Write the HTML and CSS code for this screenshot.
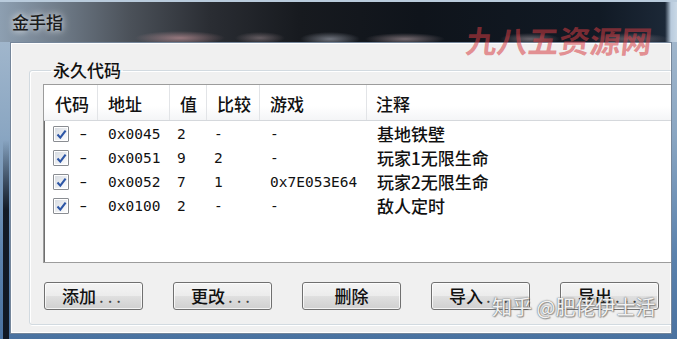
FILE: index.html
```html
<!DOCTYPE html>
<html lang="zh-CN">
<head>
<meta charset="utf-8">
<title>金手指</title>
<link rel="stylesheet" href="styles.css">
</head>
<body>
<div class="window">
  <div class="titlebar">
    <span class="title">金手指</span>
    <div class="glow"></div>
    <span class="wm-top">九八五资源网</span>
  </div>
  <div class="client">
    <fieldset class="group">
      <legend>永久代码</legend>
      <div class="list">
        <div class="head">
          <div class="hc">代码</div>
          <div class="hc">地址</div>
          <div class="hc">值</div>
          <div class="hc">比较</div>
          <div class="hc">游戏</div>
          <div class="hc last">注释</div>
        </div>
        <div class="rows">
          <div class="row">
            <div class="c c1"><span class="cb"><svg width="11" height="11" viewBox="0 0 11 11"><path d="M1.5 5.5 L4.3 8.6 L9.6 1.6" fill="none" stroke="#2d56a6" stroke-width="2.1"/></svg></span><span class="mono dash">-</span></div>
            <div class="c mono">0x0045</div>
            <div class="c mono v">2</div>
            <div class="c mono v">-</div>
            <div class="c mono">-</div>
            <div class="c cn">基地铁壁</div>
          </div>
          <div class="row">
            <div class="c c1"><span class="cb"><svg width="11" height="11" viewBox="0 0 11 11"><path d="M1.5 5.5 L4.3 8.6 L9.6 1.6" fill="none" stroke="#2d56a6" stroke-width="2.1"/></svg></span><span class="mono dash">-</span></div>
            <div class="c mono">0x0051</div>
            <div class="c mono v">9</div>
            <div class="c mono v">2</div>
            <div class="c mono">-</div>
            <div class="c cn">玩家1无限生命</div>
          </div>
          <div class="row">
            <div class="c c1"><span class="cb"><svg width="11" height="11" viewBox="0 0 11 11"><path d="M1.5 5.5 L4.3 8.6 L9.6 1.6" fill="none" stroke="#2d56a6" stroke-width="2.1"/></svg></span><span class="mono dash">-</span></div>
            <div class="c mono">0x0052</div>
            <div class="c mono v">7</div>
            <div class="c mono v">1</div>
            <div class="c mono">0x7E053E64</div>
            <div class="c cn">玩家2无限生命</div>
          </div>
          <div class="row">
            <div class="c c1"><span class="cb"><svg width="11" height="11" viewBox="0 0 11 11"><path d="M1.5 5.5 L4.3 8.6 L9.6 1.6" fill="none" stroke="#2d56a6" stroke-width="2.1"/></svg></span><span class="mono dash">-</span></div>
            <div class="c mono">0x0100</div>
            <div class="c mono v">2</div>
            <div class="c mono v">-</div>
            <div class="c mono">-</div>
            <div class="c cn">敌人定时</div>
          </div>
        </div>
      </div>
      <div class="buttons">
        <button class="btn">添加<span class="dots">...</span></button>
        <button class="btn">更改<span class="dots">...</span></button>
        <button class="btn">删除</button>
        <button class="btn">导入<span class="dots">...</span></button>
        <button class="btn">导出<span class="dots">...</span></button>
      </div>
    </fieldset>
  </div>
  <div class="wm-bottom">知乎 @肥佬伊士活</div>
</div>
</body>
</html>
```
FILE: styles.css
```css
html, body {
  margin: 0;
  padding: 0;
}
body {
  width: 677px;
  height: 339px;
  overflow: hidden;
  font-family: "Noto Sans CJK SC", "Noto Sans", sans-serif;
  color: #111;
}
.window {
  position: relative;
  width: 677px;
  height: 339px;
  display: flex;
  flex-direction: column;
  overflow: hidden;
  background:
    linear-gradient(to bottom, rgba(10, 14, 22, 0) 0, rgba(10, 14, 22, 0.9) 35%, rgba(10, 14, 22, 0.9) 100%) 3px 140px / 6px 199px no-repeat,
    linear-gradient(to bottom, #aabdd0 0, #8aa6c2 40%, #5b82ad 75%, #4a72a0 100%);
}
.titlebar {
  position: relative;
  height: 42px;
  flex: none;
  box-sizing: border-box;
  border-top: 2px solid #b9cbdc;
  display: flex;
  align-items: center;
  padding-left: 12px;
  background: linear-gradient(to right, #8d9fb1 0, #74818f 50px, #4b5159 130px, #2a2d33 210px, #171a1f 300px, #0f141b 420px, #111a25 600px, #1c2837 665px, #b9cbdd 671px, #c9d8e6 677px);
}
.title {
  position: relative;
  z-index: 2;
  font-size: 17px;
  line-height: 20px;
  font-weight: 500;
  color: #1b1b1b;
  text-shadow: 0 0 6px rgba(255, 255, 255, 0.7), 0 0 10px rgba(255, 255, 255, 0.5);
}
.glow {
  position: absolute;
  left: 60px;
  right: 8px;
  bottom: 0;
  height: 14px;
  background:
    radial-gradient(ellipse 45px 7px at 120px 10px, rgba(230, 170, 175, 0.55), rgba(230, 170, 175, 0) 100%),
    radial-gradient(ellipse 25px 6px at 200px 10px, rgba(230, 200, 205, 0.35), rgba(230, 200, 205, 0) 100%),
    radial-gradient(ellipse 30px 7px at 270px 11px, rgba(220, 225, 240, 0.45), rgba(220, 225, 240, 0) 100%),
    radial-gradient(ellipse 40px 6px at 345px 11px, rgba(240, 210, 215, 0.45), rgba(240, 210, 215, 0) 100%),
    radial-gradient(ellipse 30px 6px at 470px 11px, rgba(235, 215, 220, 0.4), rgba(235, 215, 220, 0) 100%),
    radial-gradient(ellipse 40px 6px at 570px 11px, rgba(235, 215, 220, 0.35), rgba(235, 215, 220, 0) 100%);
}
.wm-top {
  position: absolute;
  left: 466px;
  top: 20px;
  z-index: 3;
  font-size: 31px;
  line-height: 36px;
  font-weight: 700;
  color: rgba(214, 60, 66, 0.55);
  transform: skewX(-6deg);
  white-space: nowrap;
}
.client {
  flex: 1;
  margin: 0 5px 5px 10px;
  background: #f0f0f0;
  border: 1px solid #75869a;
  box-shadow: inset 0 0 0 1px #ffffff;
  overflow: hidden;
  min-height: 0;
}
.group {
  margin: 17px 0 0 18px;
  padding: 0 0 14px 13px;
  width: 700px;
  min-width: 0;
  box-sizing: border-box;
  border: 1px solid #d2dae0;
  border-radius: 3px;
  box-shadow: inset 1px 1px 0 #ffffff, 1px 1px 0 #ffffff;
}
.group legend {
  margin-left: 8px;
  padding: 0 2px;
  font-size: 17px;
  line-height: 20px;
  font-weight: 500;
  color: #111;
}
.list {
  margin-top: 4px;
  width: 640px;
  height: 179px;
  box-sizing: border-box;
  background: #ffffff;
  border: 1px solid #9c9c9c;
  box-shadow: inset 1px 1px 0 #6f6f6f;
  overflow: hidden;
}
.head,
.row {
  display: grid;
  grid-template-columns: 54px 72px 37px 53px 107px 1fr;
}
.head {
  height: 36px;
  box-sizing: border-box;
  border-bottom: 1px solid #d5d8dc;
  background: linear-gradient(to bottom, #ffffff 0, #ffffff 60%, #f4f5f7 100%);
}
.hc {
  display: flex;
  align-items: center;
  padding-left: 10px;
  padding-top: 2px;
  border-right: 1px solid #e2e4e7;
  font-size: 17px;
  line-height: 20px;
  font-weight: 500;
}
.hc:first-child {
  padding-left: 11px;
}
.hc.last {
  border-right: none;
  padding-left: 9px;
}
.rows {
  padding-top: 1px;
}
.row {
  height: 24px;
  align-items: center;
}
.c {
  padding-left: 10px;
  white-space: nowrap;
  display: flex;
  align-items: center;
}
.c.v {
  padding-left: 7px;
}
.c1 {
  padding-left: 9px;
}
.mono {
  font-family: "DejaVu Sans Mono", "Liberation Mono", monospace;
  font-size: 14.5px;
  line-height: 20px;
  color: #111;
}
.cn {
  font-size: 17px;
  line-height: 20px;
  font-weight: 500;
  color: #111;
  padding-left: 10px;
}
.cb {
  width: 16px;
  height: 16px;
  box-sizing: border-box;
  border: 1px solid #8a8d92;
  border-radius: 1px;
  background: linear-gradient(135deg, #d4d9e0 0, #eef0f3 60%, #ffffff 100%);
  box-shadow: inset 0 0 0 1px #ffffff;
  display: flex;
  align-items: center;
  justify-content: center;
}
.dash {
  margin-left: 10px;
  display: inline-block;
  transform: scaleX(1.5);
}
.buttons {
  display: flex;
  gap: 30px;
  margin-top: 19px;
  margin-left: 1px;
}
.btn {
  width: 99px;
  height: 28px;
  box-sizing: border-box;
  padding: 0;
  border: 1px solid #707070;
  border-radius: 3px;
  background: linear-gradient(to bottom, #f4f4f4 0, #ececec 48%, #dfdfdf 52%, #d0d0d0 100%);
  box-shadow: inset 0 0 0 1px rgba(255, 255, 255, 0.75);
  font-family: "Noto Sans CJK SC", sans-serif;
  font-size: 17px;
  line-height: 20px;
  font-weight: 500;
  color: #111;
  display: flex;
  align-items: center;
  justify-content: center;
}
.dots {
  letter-spacing: 4px;
  margin-left: 3px;
  font-weight: 400;
  color: #444;
}
.wm-bottom {
  position: absolute;
  left: 492px;
  top: 294px;
  font-size: 20px;
  line-height: 26px;
  color: rgba(255, 255, 255, 0.92);
  text-shadow: 0 0 1px #6a6a6a, 0 0 2px #8a8a8a, 1px 1px 1px rgba(0, 0, 0, 0.35);
  white-space: nowrap;
}
```
